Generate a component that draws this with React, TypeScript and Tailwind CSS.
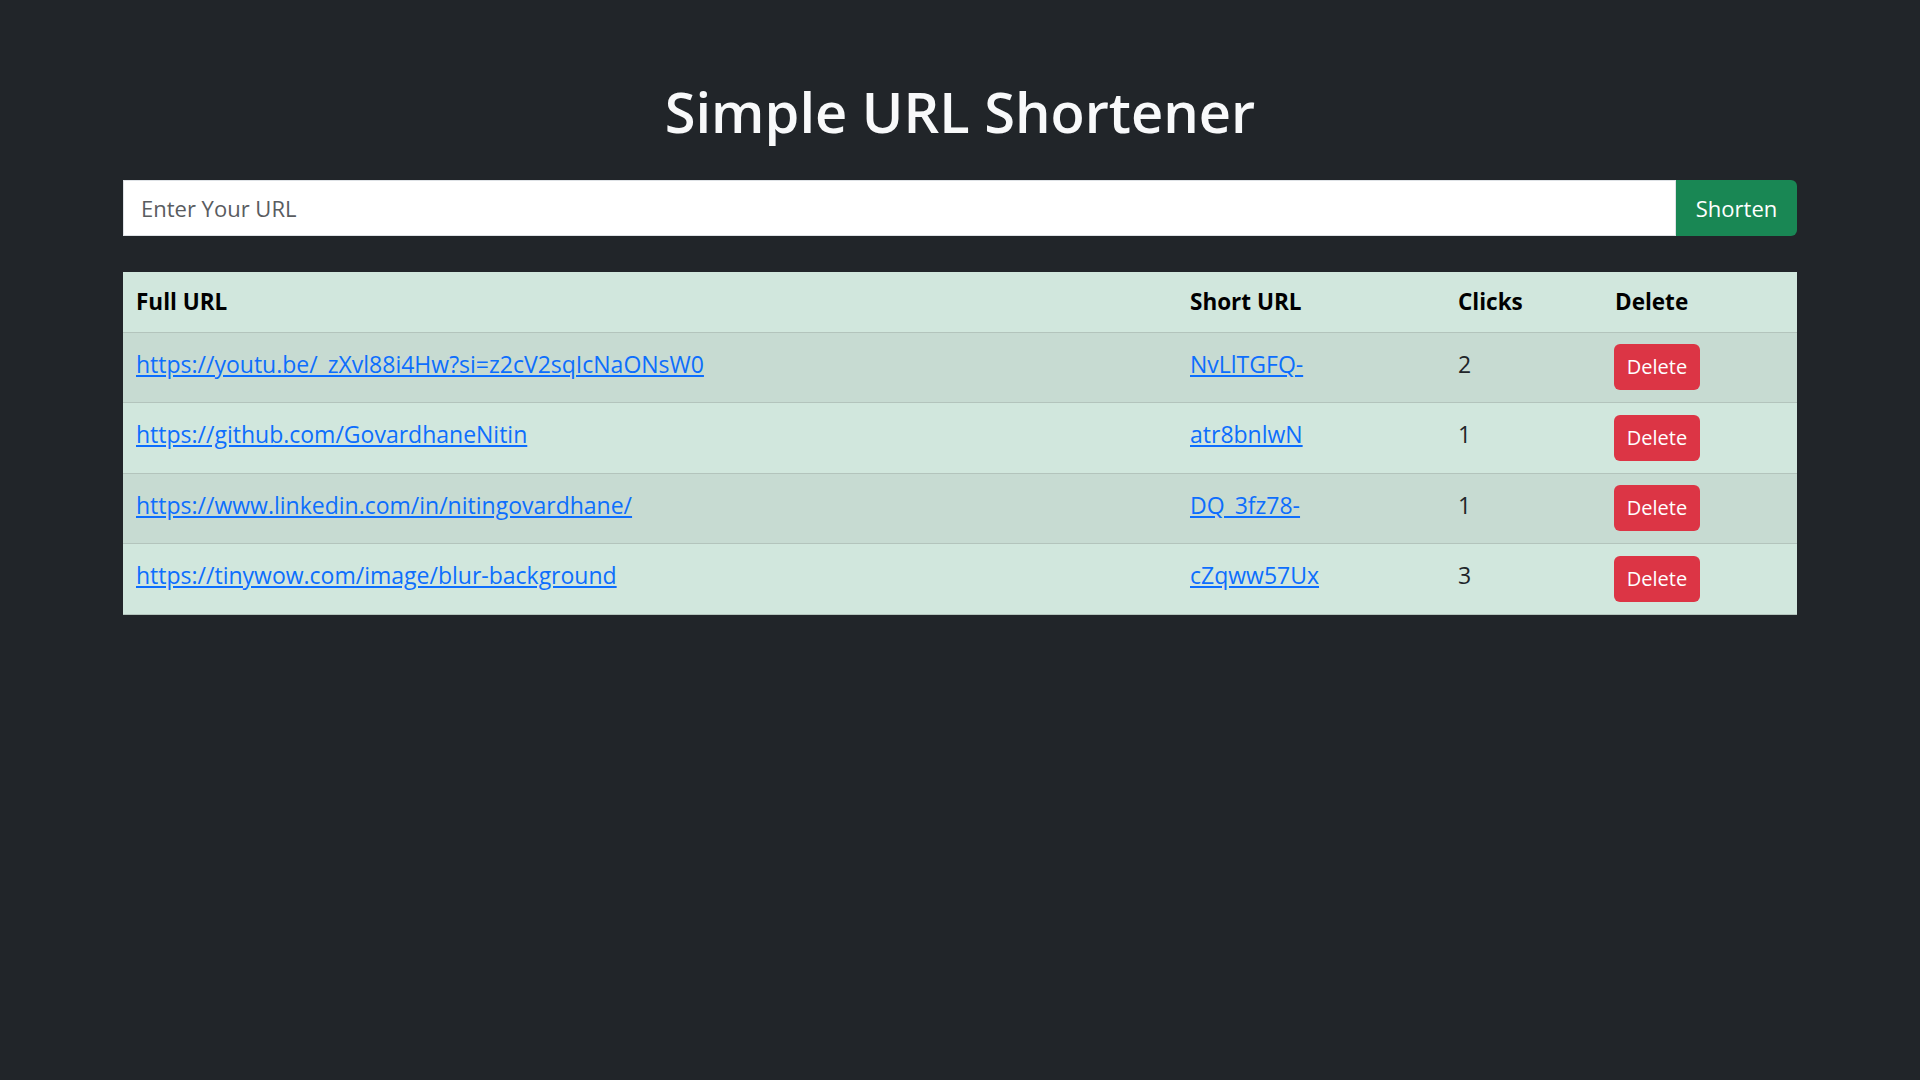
import { useState } from "react";

type Link = {
  id: number;
  full: string;
  short: string;
  clicks: number;
};

const links: Link[] = [
  { id: 1, full: "https://youtu.be/_zXvl88i4Hw?si=z2cV2sqIcNaONsW0", short: "NvLlTGFQ-", clicks: 2 },
  { id: 2, full: "https://github.com/GovardhaneNitin", short: "atr8bnlwN", clicks: 1 },
  { id: 3, full: "https://www.linkedin.com/in/nitingovardhane/", short: "DQ_3fz78-", clicks: 1 },
  { id: 4, full: "https://tinywow.com/image/blur-background", short: "cZqww57Ux", clicks: 3 },
];

export default function App() {
  const [url, setUrl] = useState("");

  return (
    <div className="min-h-screen bg-[#212529] font-['Open_Sans',sans-serif] pt-[78px]">
      <h1 className="text-center text-[56px] leading-[67px] font-semibold text-[#f8f9fa]">
        Simple URL Shortener
      </h1>

      <div className="w-[1674px] mx-auto mt-[35px]">
        <form className="flex h-[56px]" onSubmit={(e) => e.preventDefault()}>
          <input
            value={url}
            onChange={(e) => setUrl(e.target.value)}
            placeholder="Enter Your URL"
            className="flex-1 bg-white border border-[#dee2e6] px-[17px] text-[22px] text-[#212529] placeholder:text-[#595c5f] outline-none"
          />
          <button
            type="submit"
            className="w-[121px] bg-[#198754] text-white text-[22px] rounded-r-[6px]"
          >
            Shorten
          </button>
        </form>

        <table className="w-full table-fixed mt-[36px] border-collapse text-[23px] bg-[#d1e7dd]">
          <colgroup>
            <col className="w-[1054px]" />
            <col className="w-[268px]" />
            <col className="w-[157px]" />
            <col />
          </colgroup>
          <thead>
            <tr className="h-[60px] border-b border-[#b3c4bc] text-[22.5px] font-bold text-black">
              <th className="text-left px-[13px] align-middle">Full URL</th>
              <th className="text-left px-[13px] align-middle">Short URL</th>
              <th className="text-left px-[13px] align-middle">Clicks</th>
              <th className="text-left px-[13px] align-middle">Delete</th>
            </tr>
          </thead>
          <tbody>
            {links.map((link, i) => (
              <tr
                key={link.id}
                className={`h-[70.5px] border-b border-[#b3c4bc] text-[#212529] ${
                  i % 2 === 0 ? "bg-[#c7dbd2]" : "bg-[#d1e7dd]"
                }`}
              >
                <td className="px-[13px] pb-[7px] align-middle">
                  <a href={link.full} className="text-[#0d6efd] underline">
                    {link.full}
                  </a>
                </td>
                <td className="px-[13px] pb-[7px] align-middle">
                  <a href={link.short} className="text-[#0d6efd] underline">
                    {link.short}
                  </a>
                </td>
                <td className="px-[13px] pb-[7px] align-middle">{link.clicks}</td>
                <td className="px-[12px] align-middle">
                  <button className="w-[86px] h-[46px] bg-[#dc3545] text-white text-[20px] rounded-[6px]">
                    Delete
                  </button>
                </td>
              </tr>
            ))}
          </tbody>
        </table>
      </div>
    </div>
  );
}
